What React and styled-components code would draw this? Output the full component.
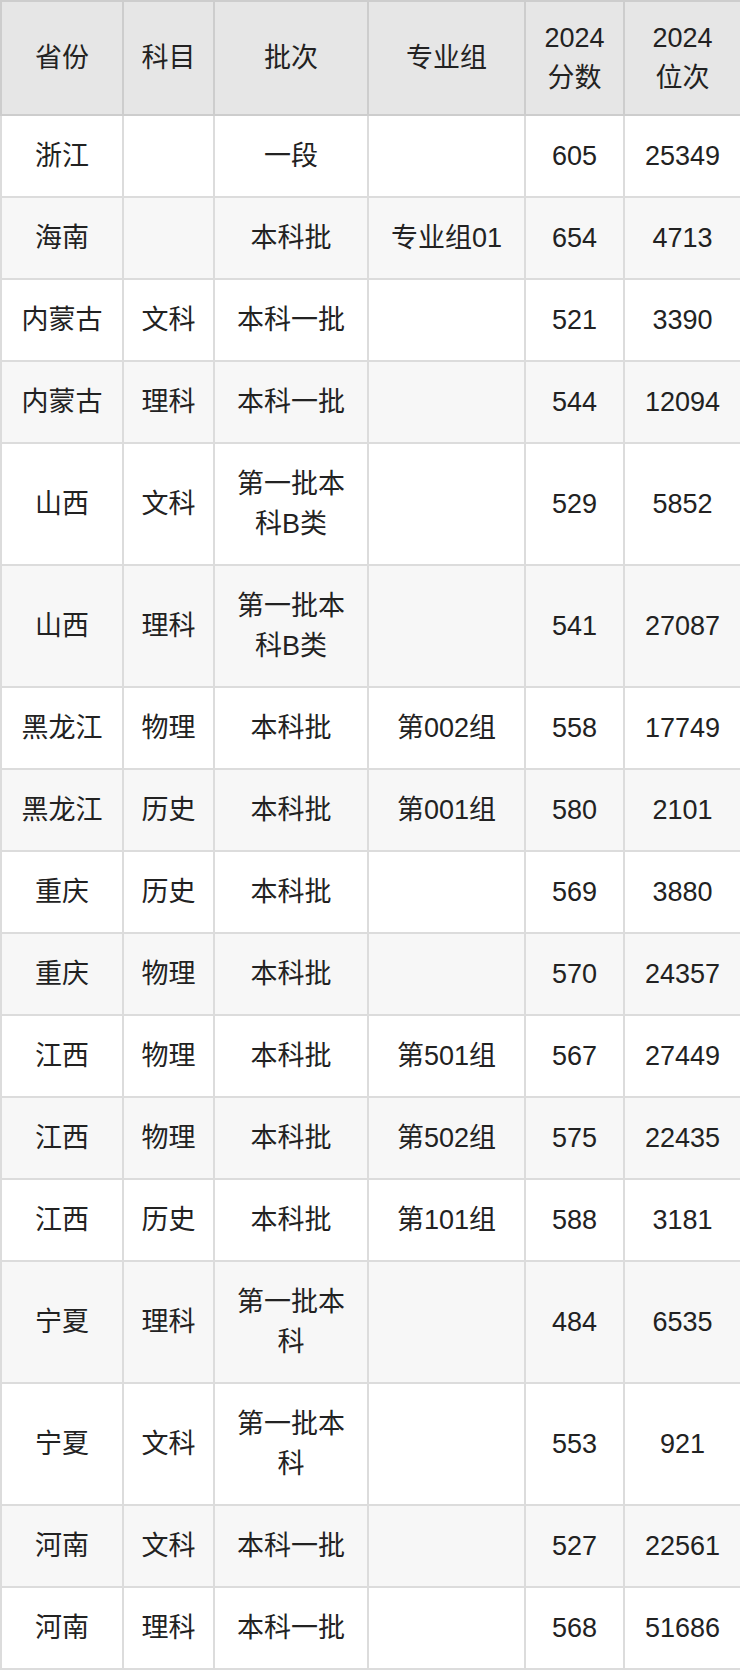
import React from "react";
import styled, { createGlobalStyle } from "styled-components";

const rows = [
  ["浙江", "", "一段", "", "605", "25349"],
  ["海南", "", "本科批", "专业组01", "654", "4713"],
  ["内蒙古", "文科", "本科一批", "", "521", "3390"],
  ["内蒙古", "理科", "本科一批", "", "544", "12094"],
  ["山西", "文科", "第一批本科B类", "", "529", "5852"],
  ["山西", "理科", "第一批本科B类", "", "541", "27087"],
  ["黑龙江", "物理", "本科批", "第002组", "558", "17749"],
  ["黑龙江", "历史", "本科批", "第001组", "580", "2101"],
  ["重庆", "历史", "本科批", "", "569", "3880"],
  ["重庆", "物理", "本科批", "", "570", "24357"],
  ["江西", "物理", "本科批", "第501组", "567", "27449"],
  ["江西", "物理", "本科批", "第502组", "575", "22435"],
  ["江西", "历史", "本科批", "第101组", "588", "3181"],
  ["宁夏", "理科", "第一批本科", "", "484", "6535"],
  ["宁夏", "文科", "第一批本科", "", "553", "921"],
  ["河南", "文科", "本科一批", "", "527", "22561"],
  ["河南", "理科", "本科一批", "", "568", "51686"],
];

const widths = [122, 91, 154, 157, 99, 117];

function App() {
  return (
    <>
      <GlobalStyle />
      <ScoreTable>
        <colgroup>
          {widths.map((w, i) => (
            <col key={i} style={{ width: w }} />
          ))}
        </colgroup>
        <thead>
          <tr>
            <HeadCell>省份</HeadCell>
            <HeadCell>科目</HeadCell>
            <HeadCell>批次</HeadCell>
            <HeadCell>专业组</HeadCell>
            <HeadCell>2024 分数</HeadCell>
            <HeadCell>2024 位次</HeadCell>
          </tr>
        </thead>
        <tbody>
          {rows.map((row, i) => (
            <Row key={i} $striped={i % 2 === 1}>
              {row.map((cell, j) => (
                <Cell key={j}>{cell}</Cell>
              ))}
            </Row>
          ))}
        </tbody>
      </ScoreTable>
    </>
  );
}

const GlobalStyle = createGlobalStyle`
  body {
    margin: 0;
    background: #fff;
    font-family: "Liberation Sans", "Noto Sans CJK SC", sans-serif;
    color: #222;
  }
`;

const ScoreTable = styled.table`
  width: 740px;
  table-layout: fixed;
  border-collapse: collapse;
  border: 2px solid #cfcfcf;
  font-size: 27px;
  line-height: 40px;
`;

const HeadCell = styled.th`
  background: #e6e6e6;
  border: 2px solid #cdcdcd;
  padding: 16px 17px;
  font-weight: normal;
  text-align: center;
  vertical-align: middle;
  color: #222;
`;

const Row = styled.tr`
  background: ${(p) => (p.$striped ? "#f7f7f7" : "#fff")};
`;

const Cell = styled.td`
  border: 2px solid #dcdcdc;
  padding: 20px 17px;
  text-align: center;
  vertical-align: middle;
`;

export default App;
